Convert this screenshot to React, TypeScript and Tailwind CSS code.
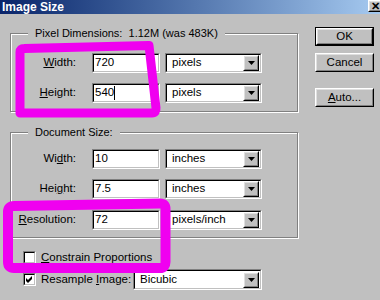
import React from "react";

function Sunken({ className, children }: { className: string; children?: React.ReactNode }) {
  return (
    <div className={`border border-t-[#808080] border-l-[#808080] border-b-white border-r-white ${className}`}>
      <div className="h-full border border-t-black border-l-black border-b-[#c0c0c0] border-r-[#c0c0c0] bg-white flex items-center">
        {children}
      </div>
    </div>
  );
}

function Raised({ className, children }: { className: string; children?: React.ReactNode }) {
  return (
    <div className={`border border-t-white border-l-white border-b-black border-r-black ${className}`}>
      <div className="h-full border border-t-[#dfdfdf] border-l-[#dfdfdf] border-b-[#808080] border-r-[#808080] bg-[#c0c0c0] flex items-center justify-center">
        {children}
      </div>
    </div>
  );
}

function Arrow() {
  return (
    <svg width="7" height="4" viewBox="0 0 7 4">
      <path d="M0 0 H7 L3.5 4 Z" fill="black" />
    </svg>
  );
}

function Select({ value, className }: { value: string; className: string }) {
  return (
    <Sunken className={className}>
      <span className="flex-1 pl-[5px] leading-none whitespace-nowrap">{value}</span>
      <Raised className="w-[16px] h-[16px] mr-px">
        <Arrow />
      </Raised>
    </Sunken>
  );
}

function Field({ value, cursor }: { value: string; cursor?: boolean }) {
  return (
    <Sunken className="w-[68px] h-[20px]">
      <span className="pl-px leading-none flex items-center">
        {value}
        {cursor && <span className="inline-block w-px h-[14px] bg-black" />}
      </span>
    </Sunken>
  );
}

function Row({ label, value, unit, cursor }: { label: React.ReactNode; value: string; unit: string; cursor?: boolean }) {
  return (
    <div className="flex items-center h-[20px]">
      <div className="w-[65px] text-right whitespace-nowrap">{label}</div>
      <div className="ml-[16px]">
        <Field value={value} cursor={cursor} />
      </div>
      <Select value={unit} className="ml-[5px] w-[97px] h-[20px]" />
    </div>
  );
}

function Group({ label, className, children }: { label: string; className: string; children?: React.ReactNode }) {
  return (
    <div className={`relative border border-[#808080] shadow-[inset_1px_1px_0_white,1px_1px_0_white] ${className}`}>
      <div className="absolute left-[17px] -top-[8px] px-[7px] bg-[#c0c0c0] leading-[14px] text-[11px] whitespace-pre">{label}</div>
      {children}
    </div>
  );
}

function Check({ checked }: { checked?: boolean }) {
  return (
    <div className="w-[13px] h-[13px] border border-t-[#808080] border-l-[#808080] border-b-white border-r-white shrink-0">
      <div className="w-full h-full border border-t-black border-l-black border-b-[#c0c0c0] border-r-[#c0c0c0] bg-white flex items-center justify-center">
        {checked && (
          <svg width="7" height="7" viewBox="0 0 7 7">
            <path d="M0 2 L2 4 L6 0 V3 L2 7 L0 5 Z" fill="black" />
          </svg>
        )}
      </div>
    </div>
  );
}

export default function App() {
  return (
    <div
      className="relative w-[380px] h-[300px] overflow-hidden bg-[#c0c0c0] text-black text-[11.5px]"
      style={{ fontFamily: '"Liberation Sans", Arial, sans-serif' }}
    >
      <div className="h-[14px] bg-gradient-to-r from-[#0a246a] to-[#a6caf0] flex items-center relative">
        <span className="pl-[2px] text-white font-bold text-[12px] leading-[14px]">Image Size</span>
        <div className="absolute left-[368px] top-0">
          <Raised className="w-[16px] h-[12px]">
            <span className="text-[11px] leading-none font-bold -ml-[2px]">✕</span>
          </Raised>
        </div>
      </div>

      <div className="flex">
        <div className="ml-[10px] w-[288px]">
          <Group label="Pixel Dimensions:  1.12M (was 483K)" className="mt-[19px] h-[79px]">
            <div className="pt-[19px] flex flex-col gap-[10px]">
              <Row label={<><u>W</u>idth:</>} value="720" unit="pixels" />
              <Row label={<><u>H</u>eight:</>} value="540" unit="pixels" cursor />
            </div>
          </Group>

          <Group label="Document Size:" className="mt-[20px] h-[106px]">
            <div className="pt-[16px] flex flex-col">
              <Row label={<>Wi<u>d</u>th:</>} value="10" unit="inches" />
              <div className="mt-[10px]">
                <Row label={<>Hei<u>g</u>ht:</>} value="7.5" unit="inches" />
              </div>
              <div className="mt-[11px]">
                <Row label={<><u>R</u>esolution:</>} value="72" unit="pixels/inch" />
              </div>
            </div>
          </Group>

          <div className="mt-[13px] flex items-center h-[13px] pl-[13px]">
            <Check />
            <span className="ml-[5px] leading-none whitespace-nowrap"><u>C</u>onstrain Proportions</span>
          </div>
          <div className="mt-[5px] flex items-center h-[21px] pl-[13px]">
            <Check checked />
            <span className="ml-[5px] w-[92px] shrink-0 leading-none whitespace-nowrap">Resample <u>I</u>mage:</span>
            <Select value="Bicubic" className="w-[129px] h-[21px]" />
          </div>
        </div>

        <div className="ml-[17px] w-[59px] mt-[13px] flex flex-col">
          <div className="border border-black h-[19px]">
            <Raised className="h-full">OK</Raised>
          </div>
          <Raised className="mt-[7px] h-[19px]">Cancel</Raised>
          <Raised className="mt-[16px] h-[19px]"><span><u>A</u>uto...</span></Raised>
        </div>
      </div>

      <svg className="absolute inset-0 pointer-events-none" width="380" height="300" viewBox="0 0 380 300">
        <path
          d="M20 113 L20 52 Q20 48.5 24 48.5 L149 45.5 L156 108 Q156.5 113 152 113 Z"
          fill="none"
          stroke="#f000f0"
          strokeWidth="9"
          strokeLinejoin="round"
        />
        <path
          d="M8 212 Q8 206 14 206 L160 203.5 Q165.5 203.5 165.5 209 L165.5 262 Q165.5 268 160 268 L14 268 Q8 268 8 262 Z"
          fill="none"
          stroke="#f000f0"
          strokeWidth="10"
          strokeLinejoin="round"
        />
      </svg>
    </div>
  );
}
